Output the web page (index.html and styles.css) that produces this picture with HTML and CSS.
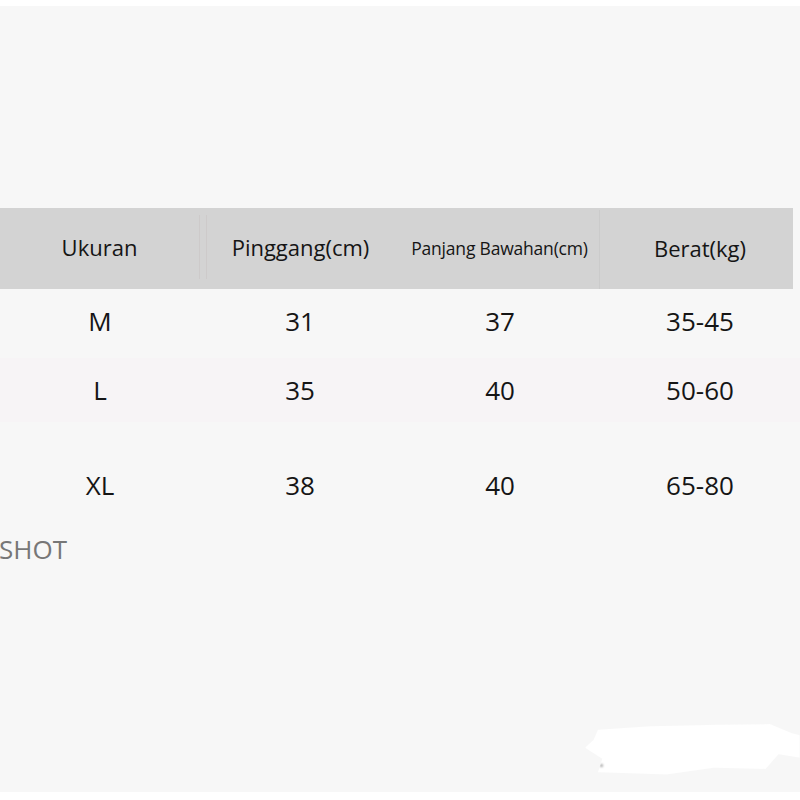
FILE: index.html
```html
<!DOCTYPE html>
<html lang="id">
<head>
<meta charset="utf-8">
<title>Size Chart</title>
<link rel="stylesheet" href="styles.css">
</head>
<body>
<div class="page">
  <div class="table">
    <div class="row head">
      <div class="cell sep-r">Ukuran</div>
      <div class="cell sep-l">Pinggang(cm)</div>
      <div class="cell small sep-r2">Panjang Bawahan(cm)</div>
      <div class="cell">Berat(kg)</div>
    </div>
    <div class="row r-m">
      <div class="cell">M</div>
      <div class="cell">31</div>
      <div class="cell">37</div>
      <div class="cell">35-45</div>
    </div>
    <div class="row r-l">
      <div class="cell">L</div>
      <div class="cell">35</div>
      <div class="cell">40</div>
      <div class="cell">50-60</div>
    </div>
    <div class="row r-xl">
      <div class="cell">XL</div>
      <div class="cell">38</div>
      <div class="cell">40</div>
      <div class="cell">65-80</div>
    </div>
  </div>
  <div class="shot">SHOT</div>
  <div class="smudge"><span class="dot"></span></div>
</div>
</body>
</html>
```

FILE: styles.css
```css
html, body {
  margin: 0;
  padding: 0;
  background: #ffffff;
}
body {
  font-family: "Open Sans", "Noto Sans", sans-serif;
  color: #151515;
}
.page {
  position: relative;
  margin-top: 6px;
  height: 786px;
  background: #f7f7f7;
  padding-top: 202px;
  box-sizing: border-box;
  overflow: hidden;
}
.table {
  display: flex;
  flex-direction: column;
}
.row {
  display: grid;
  grid-template-columns: 200px 200px 200px 200px;
}
.cell {
  display: flex;
  align-items: center;
  justify-content: center;
  box-sizing: border-box;
}
.head {
  height: 81px;
  background: #d3d3d3;
  font-size: 22px;
  width: 793px;
  align-items: stretch;
}
.head .cell {
  padding-bottom: 1px;
}
.head .small {
  font-size: 17.5px;
  padding-bottom: 4px;
  letter-spacing: -0.2px;
}
.head .sep-r {
  border-right: 1px solid #cdcaca;
  margin: 7px 0 10px;
}
.head .sep-l {
  border-left: 1px solid #cdcaca;
  margin: 7px 0 10px;
  position: relative;
  left: 6px;
  padding-right: 12px;
}
.head .sep-r2 {
  border-right: 1px solid #cbcbcb;
  margin: 2px 0 0;
}
.r-m {
  height: 69px;
  font-size: 26px;
}
.r-m .cell {
  padding-bottom: 5px;
}
.r-l {
  height: 64px;
  font-size: 26px;
  background: #f7f4f6;
}
.r-xl {
  margin-top: 28px;
  height: 70px;
  font-size: 26px;
}
.shot {
  margin-top: 12px;
  font-size: 26px;
  color: #777777;
  line-height: 34px;
  margin-left: -1px;
}
.smudge {
  position: absolute;
  left: 585px;
  top: 717px;
  width: 215px;
  height: 56px;
  background: #ffffff;
  clip-path: polygon(6% 12%, 30% 6%, 62% 3%, 86% 2%, 96% 18%, 100% 22%, 100% 62%, 90% 56%, 84% 82%, 60% 80%, 38% 92%, 6% 88%, 8% 64%, 0% 44%, 4% 30%);
  filter: blur(1px);
}
.smudge .dot {
  position: absolute;
  left: 15px;
  top: 41px;
  width: 3px;
  height: 3px;
  background: #9a9a9a;
  border-radius: 50%;
}
```
